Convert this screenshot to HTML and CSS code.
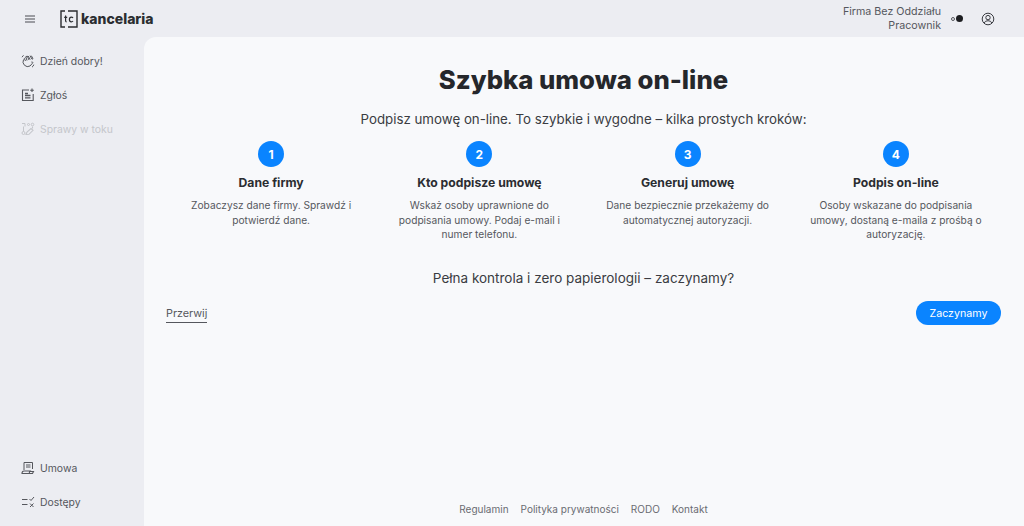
FILE: index.html
```html
<!DOCTYPE html>
<html lang="pl">
<head>
    <meta charset="UTF-8">
    <meta name="viewport" content="width=device-width, initial-scale=1.0">
    <title>Szybka umowa on-line</title>
    <link rel="stylesheet" href="styles.css">
</head>
<body>
    <header class="topbar">
        <div class="brand">
            <button class="menu-btn" type="button" aria-label="Menu">
                <svg width="10" height="8" viewBox="0 0 10 8"><path d="M0 1h10M0 4h10M0 7h10" stroke="#4a4c52" stroke-width="1.100" fill="none"/></svg>
            </button>
            <svg class="logo-mark" width="18" height="18" viewBox="0 0 18 18" fill="none">
                <path d="M5 1H1v16h4M8 1h9v16H8" stroke="#2b2d31" stroke-width="1.400"/>
                <path d="M5.600 5.500v5.300q0 1 1 1M4.200 7.300h3M13 8q-.6-.8-1.600-.8-2 0-2 2.300t2 2.300q1 0 1.600-.8" stroke="#2b2d31" stroke-width="1.200"/>
            </svg>
            <span class="logo-text">kancelaria</span>
        </div>
        <div class="account">
            <div class="account-names">
                <span>Firma Bez Oddziału</span>
                <span>Pracownik</span>
            </div>
            <span class="toggle"><i class="dot-small"></i><i class="dot-big"></i></span>
            <svg class="user-icon" width="14" height="14" viewBox="0 0 14 14" fill="none" stroke="#3a3c42" stroke-width="1">
                <circle cx="7" cy="7" r="5.800"/>
                <circle cx="7" cy="5.600" r="2.200"/>
                <path d="M3.200 11q.8-2.300 3.800-2.300t3.800 2.300"/>
            </svg>
        </div>
    </header>

    <div class="shell">
        <nav class="sidebar">
            <ul class="nav-list">
                <li class="nav-item">
                    <svg width="14" height="14" viewBox="0 0 14 14" fill="none" stroke="currentColor" stroke-width="1"><path d="M2.500 5.500q-1.500 3.500 1 5.800t5.500.7l2.500-2.800q.6-.8 0-1.200t-1.200.2"/><path d="M4.500 7 3.300 4.500l1.200-.8M6 6.500 4.800 2.700l1.500-.6L8 6M7.200 2l2 3.600M9 1.700l2 3.500 1-.5-1.700-3M1 3.200 2.500 1.300M12.800 10.600q-.3 1.600-1.800 2.600"/></svg>
                    <span>Dzień dobry!</span>
                </li>
                <li class="nav-item">
                    <svg width="14" height="14" viewBox="0 0 14 14" fill="none" stroke="currentColor" stroke-width="1.100"><path d="M8 2H1.500v10.500h10.700V6"/><path d="M4 5.500h3M4 7.500h5.500M4 9.800h5.500" stroke-width="1.300"/><path d="M11 .5v3.600M9.200 2.300h3.600"/></svg>
                    <span>Zgłoś</span>
                </li>
                <li class="nav-item is-disabled">
                    <svg width="14" height="14" viewBox="0 0 14 14" fill="none" stroke="currentColor" stroke-width="1"><path d="M1 1.500h3v3M2.500 4.500v5"/><circle cx="2.500" cy="11" r="1.500"/><circle cx="7.500" cy="2.500" r="1"/><circle cx="11.500" cy="2.500" r="1.300"/><path d="M11.500 4.500v2M5 12.500l1-2.500 4-3.500 2 1.800-4 4z" stroke-width="1.100"/></svg>
                    <span>Sprawy w toku</span>
                </li>
            </ul>
            <ul class="nav-list">
                <li class="nav-item">
                    <svg width="14" height="14" viewBox="0 0 14 14" fill="none" stroke="currentColor" stroke-width="1"><path d="M3 9V1.500h8.500V8M5 4h4.500M5 6h4.500"/><path d="M1 12.500q0-2.500 2-2.500h6q-1 1-.5 2.500zM9 10.500h3.500l-1 2H9" stroke-width="1.100"/></svg>
                    <span>Umowa</span>
                </li>
                <li class="nav-item">
                    <svg width="14" height="14" viewBox="0 0 14 14" fill="none" stroke="currentColor" stroke-width="1"><path d="M1 4.500h5.500M1 9.500h5.500M8.500 4l1.500 1.500 3-3.500M9 8.500l3.500 3.500M12.500 8.500 9 12"/></svg>
                    <span>Dostępy</span>
                </li>
            </ul>
        </nav>

        <main class="content">
            <div class="intro">
                <h1>Szybka umowa on-line</h1>
                <p class="lead">Podpisz umowę on-line. To szybkie i wygodne – kilka prostych kroków:</p>
            </div>

            <section class="steps">
                <article class="step">
                    <span class="step-num">1</span>
                    <h2>Dane firmy</h2>
                    <p>Zobaczysz dane firmy. Sprawdź i potwierdź dane.</p>
                </article>
                <article class="step">
                    <span class="step-num">2</span>
                    <h2>Kto podpisze umowę</h2>
                    <p>Wskaż osoby uprawnione do podpisania umowy. Podaj e-mail i numer telefonu.</p>
                </article>
                <article class="step">
                    <span class="step-num">3</span>
                    <h2>Generuj umowę</h2>
                    <p>Dane bezpiecznie przekażemy do automatycznej autoryzacji.</p>
                </article>
                <article class="step">
                    <span class="step-num">4</span>
                    <h2>Podpis on-line</h2>
                    <p>Osoby wskazane do podpisania umowy, dostaną e-maila z prośbą o autoryzację.</p>
                </article>
            </section>

            <p class="question">Pełna kontrola i zero papierologii – zaczynamy?</p>

            <div class="actions">
                <a class="link-stop" href="#">Przerwij</a>
                <button class="btn-start" type="button">Zaczynamy</button>
            </div>

            <footer class="legal">
                <a href="#">Regulamin</a>
                <a href="#">Polityka prywatności</a>
                <a href="#">RODO</a>
                <a href="#">Kontakt</a>
            </footer>
        </main>
    </div>
</body>
</html>
```

FILE: styles.css
```css
* {
    box-sizing: border-box;
}

html, body {
    height: 100%;
}

body {
    margin: 0;
    font-family: "Inter", "Noto Sans", sans-serif;
    background-color: #ecedf2;
    color: #2b2d31;
    display: flex;
    flex-direction: column;
    overflow: hidden;
}

/* Top bar */
.topbar {
    height: 37px;
    flex-shrink: 0;
    display: flex;
    justify-content: space-between;
    align-items: center;
    padding: 0 29px 0 25px;
}

.brand {
    display: flex;
    align-items: center;
}

.menu-btn {
    border: none;
    background: none;
    padding: 0;
    width: 10px;
    height: 8px;
    display: flex;
    margin-right: 25px;
}

.logo-mark {
    margin-right: 3px;
}

.logo-text {
    font-size: 14px;
    font-weight: 800;
    color: #2b2d31;
}

.account {
    display: flex;
    align-items: center;
}

.account-names {
    display: flex;
    flex-direction: column;
    align-items: flex-end;
    font-size: 10.700px;
    line-height: 14px;
    color: #55575d;
    margin-right: 10px;
    padding-top: 1px;
}

.toggle {
    display: flex;
    align-items: center;
    gap: 1px;
    margin-right: 18px;
}

.dot-small {
    width: 4px;
    height: 4px;
    border: 1px solid #55575d;
    border-radius: 50%;
}

.dot-big {
    width: 7px;
    height: 7px;
    background-color: #1c1d20;
    border-radius: 50%;
}

/* Sidebar */
.shell {
    flex: 1;
    display: flex;
    min-height: 0;
}

.sidebar {
    width: 144px;
    flex-shrink: 0;
    display: flex;
    flex-direction: column;
    justify-content: space-between;
    padding: 7px 0 7px 21px;
}

.nav-list {
    list-style: none;
    margin: 0;
    padding: 0;
}

.nav-item {
    height: 34px;
    display: flex;
    align-items: center;
    gap: 5px;
    font-size: 10.400px;
    color: #55575d;
}

.nav-item.is-disabled {
    color: #c4c6cb;
}

/* Main panel */
.content {
    flex: 1;
    background-color: #f8f9fb;
    border-top-left-radius: 12px;
    padding: 26px 23px 0 22px;
    display: flex;
    flex-direction: column;
}

.intro {
    text-align: center;
}

h1 {
    margin: 0;
    font-size: 25.700px;
    line-height: 34px;
    font-weight: 800;
    color: #25272b;
}

.lead {
    margin: 12px 0 0;
    font-size: 13.300px;
    line-height: 20px;
    color: #3a3c42;
}

.steps {
    display: grid;
    grid-template-columns: repeat(4, 1fr);
    column-gap: 30px;
    margin: 12px 0 0;
    padding: 0 16px;
}

.step {
    display: flex;
    flex-direction: column;
    align-items: center;
    text-align: center;
}

.step-num {
    width: 26px;
    height: 26px;
    border-radius: 50%;
    background-color: #0a84ff;
    color: #fff;
    font-size: 12px;
    font-weight: 700;
    display: flex;
    align-items: center;
    justify-content: center;
}

.step h2 {
    margin: 8px 0 0;
    font-size: 12.200px;
    line-height: 16px;
    font-weight: 700;
    color: #2b2d31;
}

.step p {
    margin: 7px 0 0;
    font-size: 10.200px;
    line-height: 14.500px;
    color: #55575d;
}

.question {
    margin: 26.500px 0 0;
    text-align: center;
    font-size: 13.500px;
    line-height: 20px;
    color: #3a3c42;
}

.actions {
    display: flex;
    justify-content: space-between;
    align-items: center;
    margin-top: 13px;
}

.link-stop {
    margin-top: 2px;
    font-size: 10.800px;
    line-height: 15px;
    color: #55575d;
    text-decoration: none;
    border-bottom: 1px solid #55575d;
    padding-bottom: 1px;
}

.btn-start {
    width: 85px;
    height: 24px;
    border: none;
    border-radius: 12px;
    background-color: #0a84ff;
    color: #fff;
    font-family: inherit;
    font-size: 10.700px;
    padding: 0;
}

.legal {
    margin-top: auto;
    display: flex;
    justify-content: center;
    gap: 12px;
    padding-bottom: 10px;
    font-size: 10px;
    line-height: 13px;
}

.legal a {
    color: #6a6c72;
    text-decoration: none;
}
```
